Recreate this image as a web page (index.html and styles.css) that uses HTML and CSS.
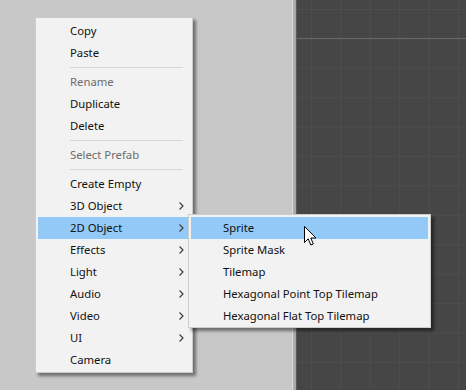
FILE: index.html
```html
<!DOCTYPE html>
<html lang="en">

<head>
    <meta charset="UTF-8">
    <meta name="viewport" content="width=device-width, initial-scale=1.0">
    <title>Hierarchy menu</title>
    <link rel="stylesheet" href="styles.css">
</head>

<body>
    <div class="editor">
        <div class="hierarchy"></div>
        <div class="splitter"></div>
        <div class="scene"></div>
    </div>

    <ul class="menu mainmenu">
        <li>Copy</li>
        <li>Paste</li>
        <li class="sep"></li>
        <li class="disabled">Rename</li>
        <li>Duplicate</li>
        <li>Delete</li>
        <li class="sep"></li>
        <li class="disabled">Select Prefab</li>
        <li class="sep"></li>
        <li>Create Empty</li>
        <li class="sub">3D Object<svg class="arrow" width="5" height="8" viewBox="0 0 5 8"><path d="M0.5 0.5 L4 4 L0.5 7.5" /></svg></li>
        <li class="sub hover">2D Object<svg class="arrow" width="5" height="8" viewBox="0 0 5 8"><path d="M0.5 0.5 L4 4 L0.5 7.5" /></svg></li>
        <li class="sub">Effects<svg class="arrow" width="5" height="8" viewBox="0 0 5 8"><path d="M0.5 0.5 L4 4 L0.5 7.5" /></svg></li>
        <li class="sub">Light<svg class="arrow" width="5" height="8" viewBox="0 0 5 8"><path d="M0.5 0.5 L4 4 L0.5 7.5" /></svg></li>
        <li class="sub">Audio<svg class="arrow" width="5" height="8" viewBox="0 0 5 8"><path d="M0.5 0.5 L4 4 L0.5 7.5" /></svg></li>
        <li class="sub">Video<svg class="arrow" width="5" height="8" viewBox="0 0 5 8"><path d="M0.5 0.5 L4 4 L0.5 7.5" /></svg></li>
        <li class="sub">UI<svg class="arrow" width="5" height="8" viewBox="0 0 5 8"><path d="M0.5 0.5 L4 4 L0.5 7.5" /></svg></li>
        <li>Camera</li>
    </ul>

    <ul class="menu submenu">
        <li class="hover">Sprite</li>
        <li>Sprite Mask</li>
        <li>Tilemap</li>
        <li>Hexagonal Point Top Tilemap</li>
        <li>Hexagonal Flat Top Tilemap</li>
    </ul>

    <svg class="cursor" width="14" height="21" viewBox="0 0 14 21">
        <path d="M0.5 0.5 L0.5 16.5 L4.2 12.8 L6.8 19 L9.3 18 L6.8 12 L12 12 Z" fill="#fff" stroke="#000" stroke-width="1" stroke-linejoin="miter" />
    </svg>
</body>

</html>
```

FILE: styles.css
```css
html,
body,
div,
ul,
li {
    margin: 0;
    padding: 0;
}

ul {
    list-style: none;
}

body {
    width: 466px;
    height: 390px;
    overflow: hidden;
    font-family: "Segoe UI", "Noto Sans", sans-serif;
    font-size: 11.3px;
    color: #000;
    position: relative;
}

.editor {
    display: flex;
    height: 390px;
}

.hierarchy {
    width: 292px;
    background: #c8c8c8;
}

.splitter {
    width: 5px;
    background: linear-gradient(to right, #d9d9d9 0, #d9d9d9 1px, #b2b2b2 1px, #a3a3a3 4px, #5a5a5a 4px);
}

.scene {
    flex: 1;
    background-color: #464646;
    background-image:
        linear-gradient(to bottom, transparent 38px, #686868 38px, #686868 39px, transparent 39px),
        linear-gradient(to right, #4d4d4d 1px, transparent 1px),
        linear-gradient(to bottom, #4d4d4d 1px, transparent 1px);
    background-size: 100% 100%, 29.4px 29.4px, 29.4px 29.4px;
    background-position: 0 0, 14px 0, 0 9px;
}

.menu {
    position: absolute;
    background: #f2f2f2;
    border: 1px solid #cccccc;
    padding: 2px 2px 1px 2px;
    box-shadow: 3px 3px 3px rgba(0, 0, 0, 0.45);
}

.menu li {
    height: 22px;
    line-height: 22px;
    padding-left: 32px;
    padding-right: 10px;
    position: relative;
    white-space: nowrap;
    color: #111;
}

.menu li.hover {
    background: #92c9f7;
}

.menu li.disabled {
    color: #6d6d6d;
}

.menu li.sep {
    height: 7px;
    padding: 0;
}

.menu li.sep::after {
    content: "";
    position: absolute;
    left: 32px;
    right: 7px;
    top: 3px;
    height: 1px;
    background: #d7d7d7;
}

.mainmenu {
    left: 35px;
    top: 17px;
    width: 152px;
}

.submenu {
    left: 188px;
    top: 214px;
    width: 237px;
    padding-bottom: 0;
}

.arrow {
    position: absolute;
    right: 6px;
    top: 7px;
    fill: none;
    stroke: #404040;
    stroke-width: 1.2;
}

.cursor {
    position: absolute;
    left: 304px;
    top: 226px;
}
```
